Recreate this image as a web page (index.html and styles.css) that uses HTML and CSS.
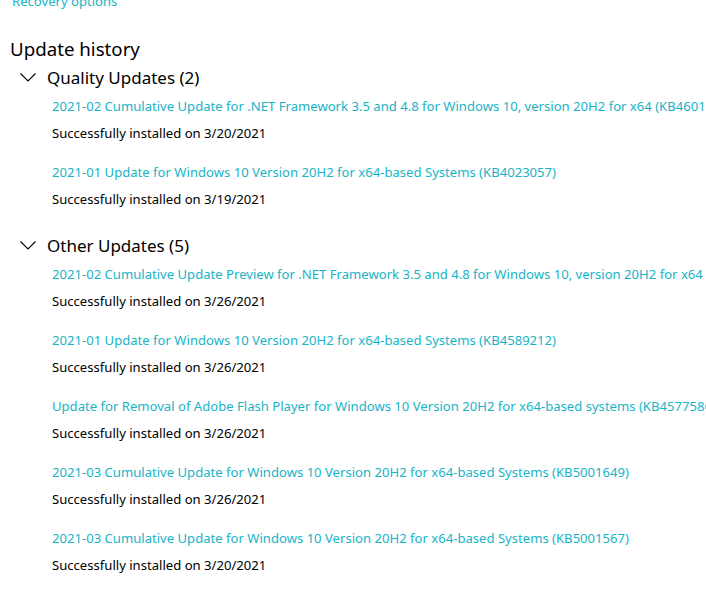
FILE: index.html
```html
<!DOCTYPE html>
<html lang="en">
<head>
    <meta charset="UTF-8">
    <title>Update history</title>
    <link rel="stylesheet" href="styles.css">
</head>
<body>

<div class="page">
    <a class="recovery" href="#">Recovery options</a>

    <h2>Update history</h2>

    <!-- Quality updates -->
    <div class="group">
        <div class="group-head">
            <svg class="chevron" width="16" height="9" viewBox="0 0 16 9"><path d="M0.5 0.5 L8 8 L15.5 0.5" fill="none" stroke="#000" stroke-width="1.1"/></svg>
            <span>Quality Updates (2)</span>
        </div>
        <div class="item">
            <a href="#">2021-02 Cumulative Update for .NET Framework 3.5 and 4.8 for Windows 10, version 20H2 for x64 (KB4601050)</a>
            <div class="status">Successfully installed on 3/20/2021</div>
        </div>
        <div class="item">
            <a href="#">2021-01 Update for Windows 10 Version 20H2 for x64-based Systems (KB4023057)</a>
            <div class="status">Successfully installed on 3/19/2021</div>
        </div>
    </div>

    <!-- Other updates -->
    <div class="group">
        <div class="group-head">
            <svg class="chevron" width="16" height="9" viewBox="0 0 16 9"><path d="M0.5 0.5 L8 8 L15.5 0.5" fill="none" stroke="#000" stroke-width="1.1"/></svg>
            <span>Other Updates (5)</span>
        </div>
        <div class="item">
            <a href="#">2021-02 Cumulative Update Preview for .NET Framework 3.5 and 4.8 for Windows 10, version 20H2 for x64 (KB4601554)</a>
            <div class="status">Successfully installed on 3/26/2021</div>
        </div>
        <div class="item">
            <a href="#">2021-01 Update for Windows 10 Version 20H2 for x64-based Systems (KB4589212)</a>
            <div class="status">Successfully installed on 3/26/2021</div>
        </div>
        <div class="item">
            <a href="#">Update for Removal of Adobe Flash Player for Windows 10 Version 20H2 for x64-based systems (KB4577586)</a>
            <div class="status">Successfully installed on 3/26/2021</div>
        </div>
        <div class="item">
            <a href="#">2021-03 Cumulative Update for Windows 10 Version 20H2 for x64-based Systems (KB5001649)</a>
            <div class="status">Successfully installed on 3/26/2021</div>
        </div>
        <div class="item">
            <a href="#">2021-03 Cumulative Update for Windows 10 Version 20H2 for x64-based Systems (KB5001567)</a>
            <div class="status">Successfully installed on 3/20/2021</div>
        </div>
    </div>
</div>

</body>
</html>
```

FILE: styles.css
```css
body {
    margin: 0;
    background-color: #fff;
    font-family: "Noto Sans", "Open Sans", sans-serif;
    color: #000;
    overflow: hidden;
}
.page {
    padding-left: 10px;
    white-space: nowrap;
}
a {
    color: #18b4c6;
    text-decoration: none;
}
.recovery {
    display: block;
    margin-top: -9px;
    margin-left: 2px;
    font-size: 13.1px;
    line-height: 20px;
}
h2 {
    margin: 24px 0 0;
    font-size: 18.7px;
    font-weight: normal;
    line-height: 28px;
}
.group + .group {
    padding-top: 3px;
}
.group-head {
    display: flex;
    align-items: center;
    height: 28px;
    font-size: 17px;
}
.chevron {
    margin: 0 11px 0 10px;
}
.item {
    padding-left: 42px;
    margin-bottom: 19px;
    font-size: 13.1px;
    line-height: 20px;
}
.group-head + .item {
    margin-top: 5px;
}
.item a {
    display: block;
}
.status {
    margin-top: 7px;
}
```
